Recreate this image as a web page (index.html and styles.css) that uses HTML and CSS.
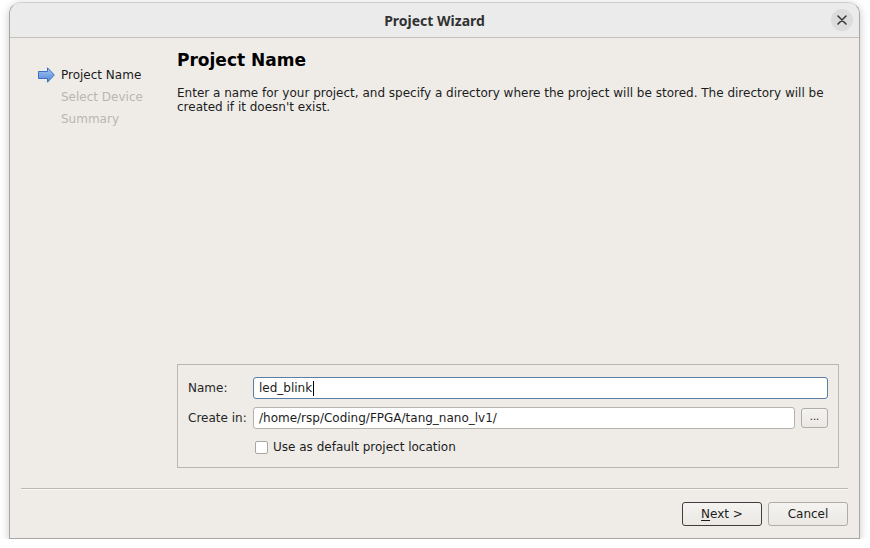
FILE: index.html
```html
<!DOCTYPE html>
<html>
<head>
<meta charset="utf-8">
<link rel="stylesheet" href="styles.css">
</head>
<body>
<div class="window">
  <div class="titlebar">
    <span class="title">Project Wizard</span>
    <span class="close">
      <svg width="10" height="10" viewBox="0 0 10 10"><path d="M1 1L9 9M9 1L1 9" stroke="#3a3a3a" stroke-width="1.6" stroke-linecap="round"/></svg>
    </span>
  </div>
  <div class="content">
    <div class="body">
      <ul class="steps">
        <li class="step current">
          <svg class="arrow" width="17" height="16" viewBox="0 0 17 16">
            <defs>
              <linearGradient id="ag" x1="0" y1="0" x2="0" y2="1">
                <stop offset="0" stop-color="#a9c7f2"/>
                <stop offset="1" stop-color="#4f86d6"/>
              </linearGradient>
            </defs>
            <path d="M0.5 4.5H9.5V0.8L16.3 8L9.5 15.2V11.5H0.5Z" fill="url(#ag)" stroke="#3d6fc0" stroke-width="1" stroke-linejoin="round"/>
          </svg>
          <span>Project Name</span>
        </li>
        <li class="step">Select Device</li>
        <li class="step">Summary</li>
      </ul>
      <div class="panel">
        <h1 class="heading">Project Name</h1>
        <p class="desc">Enter a name for your project, and specify a directory where the project will be stored. The directory will be<br>created if it doesn't exist.</p>
        <div class="group">
          <label class="lbl">Name:</label>
          <div class="input focused"><span>led_blink</span><span class="caret"></span></div>
          <label class="lbl">Create in:</label>
          <div class="row">
            <div class="input grow">/home/rsp/Coding/FPGA/tang_nano_lv1/</div>
            <button class="btn small">...</button>
          </div>
          <div></div>
          <div class="check-row"><span class="checkbox"></span><span>Use as default project location</span></div>
        </div>
      </div>
    </div>
    <div class="footer">
      <div class="sep"></div>
      <div class="buttons">
        <button class="btn default"><u>N</u>ext &gt;</button>
        <button class="btn">Cancel</button>
      </div>
    </div>
  </div>
</div>
</body>
</html>
```

FILE: styles.css
```css
html, body {
  margin: 0;
  padding: 0;
  background: #ffffff;
}
body {
  font-family: "DejaVu Sans", sans-serif;
  font-size: 12px;
  color: #1c1c1c;
  padding-top: 2px;
  padding-left: 9px;
}
.window {
  box-sizing: border-box;
  width: 851px;
  height: 537px;
  border: 1px solid #a8a6a3;
  border-top-color: #d0d0d0;
  border-radius: 12px 12px 0 0;
  background: #efece8;
  display: flex;
  flex-direction: column;
  box-shadow: 0 2px 10px rgba(0,0,0,0.22);
}
.titlebar {
  height: 34px;
  border-bottom: 1px solid #c4c1bd;
  background: #ebebeb;
  border-radius: 11px 11px 0 0;
  display: flex;
  align-items: center;
  justify-content: center;
  position: relative;
}
.title {
  font-family: "Noto Sans", sans-serif;
  font-weight: bold;
  font-size: 14px;
  color: #323232;
  margin-top: 1px;
}
.close {
  position: absolute;
  right: 6px;
  top: 6px;
  width: 22px;
  height: 22px;
  border-radius: 50%;
  background: #dcdcdc;
  display: flex;
  align-items: center;
  justify-content: center;
}
.content {
  flex: 1;
  display: flex;
  flex-direction: column;
}
.body {
  flex: 1;
  display: flex;
  padding-bottom: 20px;
}
.steps {
  list-style: none;
  margin: 0;
  padding: 26px 0 0 28px;
  width: 139px;
}
.step {
  height: 22px;
  line-height: 22px;
  color: #b9b6b2;
  padding-left: 23px;
  display: flex;
  align-items: center;
}
.step.current {
  color: #1a1a1a;
  padding-left: 0;
}
.arrow {
  margin-right: 6px;
  flex: none;
}
.panel {
  flex: 1;
  display: flex;
  flex-direction: column;
  padding: 11px 20px 0 0;
}
.heading {
  margin: 0;
  font-size: 17px;
  line-height: 22px;
  font-weight: bold;
  color: #000;
}
.desc {
  margin: 15px 0 0 0;
  line-height: 14px;
  color: #1c1c1c;
}
.group {
  margin-top: auto;
  border: 1px solid #bab6b1;
  padding: 12px 10px 10px 10px;
  display: grid;
  grid-template-columns: 65px 1fr;
  grid-template-rows: 22px 22px 20px;
  row-gap: 8px;
}
.lbl {
  display: flex;
  align-items: center;
  color: #262626;
}
.input {
  box-sizing: border-box;
  height: 22px;
  background: #fff;
  border: 1px solid #b6b2ac;
  border-radius: 3px;
  padding: 0 5px;
  display: flex;
  align-items: center;
  color: #1c1c1c;
}
.input.focused {
  border-color: #5b7ea6;
}
.caret {
  display: inline-block;
  width: 1px;
  height: 15px;
  background: #000;
  margin-left: 1px;
}
.row {
  display: flex;
  align-items: center;
  gap: 6px;
}
.grow {
  flex: 1;
}
.btn {
  box-sizing: border-box;
  font-family: "DejaVu Sans", sans-serif;
  font-size: 12px;
  color: #1c1c1c;
  width: 80px;
  height: 24px;
  border: 1px solid #b0aca6;
  border-radius: 3px;
  background: linear-gradient(#f5f3f1, #ebe8e4);
  padding: 0;
  margin: 0;
}
.btn.small {
  width: 27px;
  height: 20px;
  font-size: 10px;
  line-height: 14px;
  padding-bottom: 2px;
}
.btn.default {
  border-color: #3e3e3e;
}
.btn u {
  text-underline-offset: 2px;
}
.check-row {
  display: flex;
  align-items: center;
  gap: 5px;
  padding-left: 2px;
}
.checkbox {
  box-sizing: border-box;
  width: 13px;
  height: 13px;
  background: #fff;
  border: 1px solid #aaa6a1;
  border-radius: 2px;
}
.footer {
  padding: 0 11px 12px 11px;
}
.sep {
  height: 1px;
  background: #bdb8b3;
  border-bottom: 1px solid #f8f7f5;
  margin-bottom: 12px;
}
.buttons {
  display: flex;
  justify-content: flex-end;
  gap: 6px;
}
```
